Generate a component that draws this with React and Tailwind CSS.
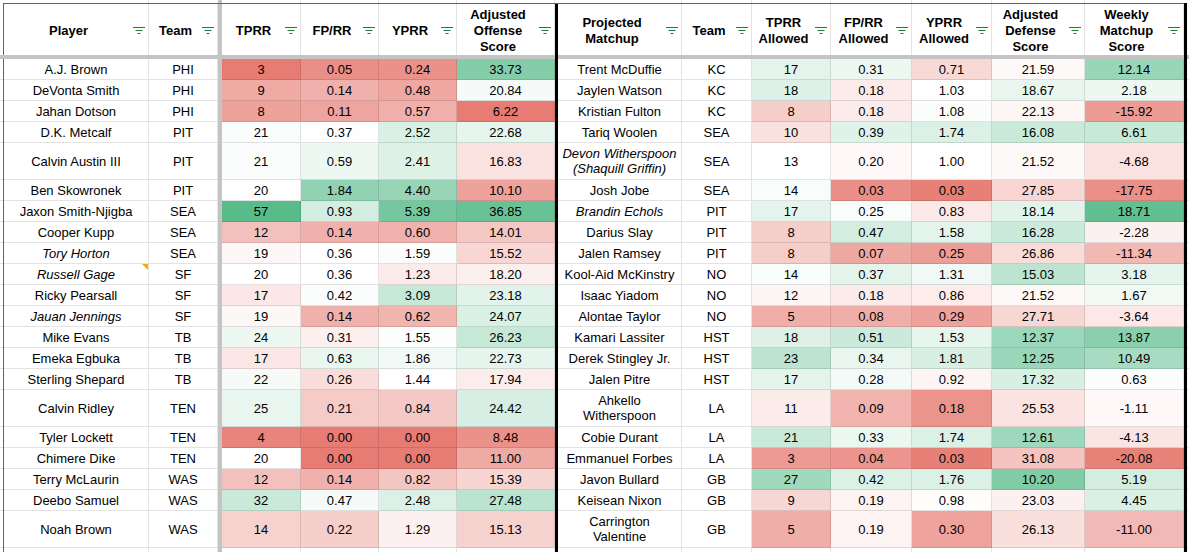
import React from 'react';

const RED = [230, 124, 115];
const GREEN = [87, 187, 138];

// color scale like the sheet's conditional formatting: red -> white -> green
const heat = (v, s) => {
  let t, c;
  if ((v - s.mid) * (s.hi - s.mid) > 0) {
    t = (v - s.mid) / (s.hi - s.mid);
    c = GREEN;
  } else {
    t = (v - s.mid) / (s.lo - s.mid);
    c = RED;
  }
  t = Math.max(0, Math.min(1, t));
  const ch = (i) => Math.round(255 + (c[i] - 255) * t);
  return `rgb(${ch(0)}, ${ch(1)}, ${ch(2)})`;
};

const SCALES = {
  tprr: { lo: 3, mid: 20, hi: 57 },
  fprr: { lo: 0, mid: 0.35, hi: 2.6 },
  yprr: { lo: 0, mid: 1.45, hi: 6.2 },
  adjOff: { lo: 6.2, mid: 19.8, hi: 38.8 },
  tprrA: { lo: 0, mid: 13, hi: 38 },
  fprrA: { lo: 0, mid: 0.21, hi: 1.2 },
  yprrA: { lo: 0, mid: 1.0, hi: 4.5 },
  adjDef: { lo: 44, mid: 20.5, hi: 6.8 },
  weekly: { lo: -21, mid: 0, hi: 20 },
};

const OFFENSE = [
  { name: 'A.J. Brown', team: 'PHI', v: [3, 0.05, 0.24, 33.73] },
  { name: 'DeVonta Smith', team: 'PHI', v: [9, 0.14, 0.48, 20.84] },
  { name: 'Jahan Dotson', team: 'PHI', v: [8, 0.11, 0.57, 6.22] },
  { name: 'D.K. Metcalf', team: 'PIT', v: [21, 0.37, 2.52, 22.68] },
  { name: 'Calvin Austin III', team: 'PIT', v: [21, 0.59, 2.41, 16.83] },
  { name: 'Ben Skowronek', team: 'PIT', v: [20, 1.84, 4.4, 10.1] },
  { name: 'Jaxon Smith-Njigba', team: 'SEA', v: [57, 0.93, 5.39, 36.85] },
  { name: 'Cooper Kupp', team: 'SEA', v: [12, 0.14, 0.6, 14.01] },
  { name: 'Tory Horton', team: 'SEA', v: [19, 0.36, 1.59, 15.52], italic: true },
  { name: 'Russell Gage', team: 'SF', v: [20, 0.36, 1.23, 18.2], italic: true, note: true },
  { name: 'Ricky Pearsall', team: 'SF', v: [17, 0.42, 3.09, 23.18] },
  { name: 'Jauan Jennings', team: 'SF', v: [19, 0.14, 0.62, 24.07], italic: true },
  { name: 'Mike Evans', team: 'TB', v: [24, 0.31, 1.55, 26.23] },
  { name: 'Emeka Egbuka', team: 'TB', v: [17, 0.63, 1.86, 22.73] },
  { name: 'Sterling Shepard', team: 'TB', v: [22, 0.26, 1.44, 17.94] },
  { name: 'Calvin Ridley', team: 'TEN', v: [25, 0.21, 0.84, 24.42] },
  { name: 'Tyler Lockett', team: 'TEN', v: [4, 0.0, 0.0, 8.48] },
  { name: 'Chimere Dike', team: 'TEN', v: [20, 0.0, 0.0, 11.0] },
  { name: 'Terry McLaurin', team: 'WAS', v: [12, 0.14, 0.82, 15.39] },
  { name: 'Deebo Samuel', team: 'WAS', v: [32, 0.47, 2.48, 27.48] },
  { name: 'Noah Brown', team: 'WAS', v: [14, 0.22, 1.29, 15.13] },
];

const DEFENSE = [
  { name: ['Trent McDuffie'], team: 'KC', v: [17, 0.31, 0.71, 21.59, 12.14] },
  { name: ['Jaylen Watson'], team: 'KC', v: [18, 0.18, 1.03, 18.67, 2.18] },
  { name: ['Kristian Fulton'], team: 'KC', v: [8, 0.18, 1.08, 22.13, -15.92] },
  { name: ['Tariq Woolen'], team: 'SEA', v: [10, 0.39, 1.74, 16.08, 6.61] },
  { name: ['Devon Witherspoon', '(Shaquill Griffin)'], team: 'SEA', v: [13, 0.2, 1.0, 21.52, -4.68], italic: true },
  { name: ['Josh Jobe'], team: 'SEA', v: [14, 0.03, 0.03, 27.85, -17.75] },
  { name: ['Brandin Echols'], team: 'PIT', v: [17, 0.25, 0.83, 18.14, 18.71], italic: true },
  { name: ['Darius Slay'], team: 'PIT', v: [8, 0.47, 1.58, 16.28, -2.28] },
  { name: ['Jalen Ramsey'], team: 'PIT', v: [8, 0.07, 0.25, 26.86, -11.34] },
  { name: ['Kool-Aid McKinstry'], team: 'NO', v: [14, 0.37, 1.31, 15.03, 3.18] },
  { name: ['Isaac Yiadom'], team: 'NO', v: [12, 0.18, 0.86, 21.52, 1.67] },
  { name: ['Alontae Taylor'], team: 'NO', v: [5, 0.08, 0.29, 27.71, -3.64] },
  { name: ['Kamari Lassiter'], team: 'HST', v: [18, 0.51, 1.53, 12.37, 13.87] },
  { name: ['Derek Stingley Jr.'], team: 'HST', v: [23, 0.34, 1.81, 12.25, 10.49] },
  { name: ['Jalen Pitre'], team: 'HST', v: [17, 0.28, 0.92, 17.32, 0.63] },
  { name: ['Ahkello', 'Witherspoon'], team: 'LA', v: [11, 0.09, 0.18, 25.53, -1.11] },
  { name: ['Cobie Durant'], team: 'LA', v: [21, 0.33, 1.74, 12.61, -4.13] },
  { name: ['Emmanuel Forbes'], team: 'LA', v: [3, 0.04, 0.03, 31.08, -20.08] },
  { name: ['Javon Bullard'], team: 'GB', v: [27, 0.42, 1.76, 10.2, 5.19] },
  { name: ['Keisean Nixon'], team: 'GB', v: [9, 0.19, 0.98, 23.03, 4.45] },
  { name: ['Carrington', 'Valentine'], team: 'GB', v: [5, 0.19, 0.3, 26.13, -11.0] },
];

const TALL = [4, 15, 20];

const grid = 'shrink-0 border-r border-b border-black/[0.11]';
const cell = `${grid} flex items-center justify-center text-center leading-[15px] px-[3px] whitespace-nowrap`;

function FilterIcon() {
  return (
    <svg width="12" height="8" viewBox="0 0 12 8" className="shrink-0">
      <path d="M0 0.5H12M2.5 3.5H9.5M4.5 6.5H7.5" stroke="#188038" strokeWidth="1" />
    </svg>
  );
}

function HeadCell({ w, lines }) {
  return (
    <div className={`${w} shrink-0 flex items-center border-r border-black/[0.11] pr-[3px] pt-[3px]`}>
      <div className="flex-1 text-center font-bold leading-[16px]">
        {lines.map((l) => (
          <div key={l}>{l}</div>
        ))}
      </div>
      <FilterIcon />
    </div>
  );
}

function Num({ w, value, scale, fixed = 2 }) {
  return (
    <div className={`${cell} ${w}`} style={{ backgroundColor: heat(value, scale) }}>
      {value.toFixed(fixed)}
    </div>
  );
}

export default function App() {
  return (
    <div className="w-[1189px] h-[552px] overflow-hidden bg-white text-black text-[13px] font-['Liberation_Sans',Arial,sans-serif]">
      {/* strip of the row above the table */}
      <div className="flex h-[3px]">
        <div className="w-[4px] shrink-0" />
        <div className="w-[145px] shrink-0 border-r border-black/[0.11]" />
        <div className="w-[69px] shrink-0" />
        <div className="w-[4px] shrink-0 bg-[#c4c4c4]" />
        <div className="w-[79px] shrink-0 border-r border-black/[0.11]" />
        <div className="w-[78px] shrink-0 border-r border-black/[0.11]" />
        <div className="w-[78px] shrink-0 border-r border-black/[0.11]" />
        <div className="w-[98px] shrink-0 border-r border-black/[0.11]" />
        <div className="w-[3px] shrink-0" />
        <div className="w-[124px] shrink-0 border-r border-black/[0.11]" />
        <div className="w-[70px] shrink-0 border-r border-black/[0.11]" />
        <div className="w-[79px] shrink-0 border-r border-black/[0.11]" />
        <div className="w-[81px] shrink-0 border-r border-black/[0.11]" />
        <div className="w-[80px] shrink-0 border-r border-black/[0.11]" />
        <div className="w-[93px] shrink-0 border-r border-black/[0.11]" />
        <div className="w-[99px] shrink-0" />
      </div>

      {/* green filter range top edge */}
      <div className="flex h-[1px]">
        <div className="w-[3px] shrink-0" />
        <div className="w-[1181px] shrink-0 bg-[#1e8e3e]" />
        <div className="w-[3px] shrink-0 bg-black" />
      </div>

      {/* header */}
      <div className="flex h-[51px]">
        <div className="w-[3px] shrink-0" />
        <div className="w-[1px] shrink-0 bg-[#1e8e3e]" />
        <HeadCell w="w-[145px]" lines={['Player']} />
        <HeadCell w="w-[69px]" lines={['Team']} />
        <div className="w-[4px] shrink-0 bg-[#c4c4c4]" />
        <HeadCell w="w-[79px]" lines={['TPRR']} />
        <HeadCell w="w-[78px]" lines={['FP/RR']} />
        <HeadCell w="w-[78px]" lines={['YPRR']} />
        <HeadCell w="w-[98px]" lines={['Adjusted', 'Offense', 'Score']} />
        <div className="w-[3px] shrink-0 bg-black" />
        <HeadCell w="w-[124px]" lines={['Projected', 'Matchup']} />
        <HeadCell w="w-[70px]" lines={['Team']} />
        <HeadCell w="w-[79px]" lines={['TPRR', 'Allowed']} />
        <HeadCell w="w-[81px]" lines={['FP/RR', 'Allowed']} />
        <HeadCell w="w-[80px]" lines={['YPRR', 'Allowed']} />
        <HeadCell w="w-[93px]" lines={['Adjusted', 'Defense', 'Score']} />
        <HeadCell w="w-[99px]" lines={['Weekly', 'Matchup', 'Score']} />
        <div className="w-[3px] shrink-0 bg-black" />
      </div>

      {/* frozen rows divider */}
      <div className="flex h-[4px]">
        <div className="w-[555px] shrink-0 bg-[#c4c4c4]" />
        <div className="w-[3px] shrink-0 bg-black" />
        <div className="w-[626px] shrink-0 bg-[#c4c4c4]" />
        <div className="w-[3px] shrink-0 bg-black" />
        <div className="w-[2px] shrink-0 bg-[#c4c4c4]" />
      </div>

      {OFFENSE.map((o, i) => {
        const d = DEFENSE[i];
        const tall = TALL.includes(i);
        return (
          <div key={o.name} className={`flex ${tall ? 'h-[37px]' : 'h-[21px]'}`}>
            <div className="w-[3px] shrink-0 border-b border-black/[0.11]" />
            <div className="w-[1px] shrink-0 bg-[#1e8e3e]" />
            <div className={`${cell} w-[145px] relative ${o.italic ? 'italic' : ''}`}>
              {o.name}
              {o.note && (
                <span className="absolute top-0 right-0 w-0 h-0 border-l-[6px] border-l-transparent border-t-[6px] border-t-[#f9ab00]" />
              )}
            </div>
            <div className={`${cell} w-[69px]`}>{o.team}</div>
            <div className="w-[4px] shrink-0 bg-[#c4c4c4]" />
            <Num w="w-[79px]" value={o.v[0]} scale={SCALES.tprr} fixed={0} />
            <Num w="w-[78px]" value={o.v[1]} scale={SCALES.fprr} />
            <Num w="w-[78px]" value={o.v[2]} scale={SCALES.yprr} />
            <Num w="w-[98px]" value={o.v[3]} scale={SCALES.adjOff} />
            <div className="w-[3px] shrink-0 bg-black" />
            <div className={`${cell} w-[124px] flex-col ${d.italic ? 'italic' : ''}`}>
              {d.name.map((l) => (
                <div key={l}>{l}</div>
              ))}
            </div>
            <div className={`${cell} w-[70px]`}>{d.team}</div>
            <Num w="w-[79px]" value={d.v[0]} scale={SCALES.tprrA} fixed={0} />
            <Num w="w-[81px]" value={d.v[1]} scale={SCALES.fprrA} />
            <Num w="w-[80px]" value={d.v[2]} scale={SCALES.yprrA} />
            <Num w="w-[93px]" value={d.v[3]} scale={SCALES.adjDef} />
            <Num w="w-[99px]" value={d.v[4]} scale={SCALES.weekly} />
            <div className="w-[3px] shrink-0 bg-black" />
            <div className="w-[2px] shrink-0 border-b border-black/[0.11]" />
          </div>
        );
      })}

      {/* next (empty) row */}
      <div className="flex h-[21px]">
        <div className="w-[3px] shrink-0" />
        <div className="w-[1px] shrink-0 bg-[#1e8e3e]" />
        <div className={`${grid} w-[145px]`} />
        <div className={`${grid} w-[69px]`} />
        <div className="w-[4px] shrink-0 bg-[#c4c4c4]" />
        <div className={`${grid} w-[79px]`} />
        <div className={`${grid} w-[78px]`} />
        <div className={`${grid} w-[78px]`} />
        <div className={`${grid} w-[98px]`} />
        <div className="w-[3px] shrink-0 bg-black" />
        <div className={`${grid} w-[124px]`} />
        <div className={`${grid} w-[70px]`} />
        <div className={`${grid} w-[79px]`} />
        <div className={`${grid} w-[81px]`} />
        <div className={`${grid} w-[80px]`} />
        <div className={`${grid} w-[93px]`} />
        <div className={`${grid} w-[99px]`} />
        <div className="w-[3px] shrink-0 bg-black" />
      </div>
    </div>
  );
}
